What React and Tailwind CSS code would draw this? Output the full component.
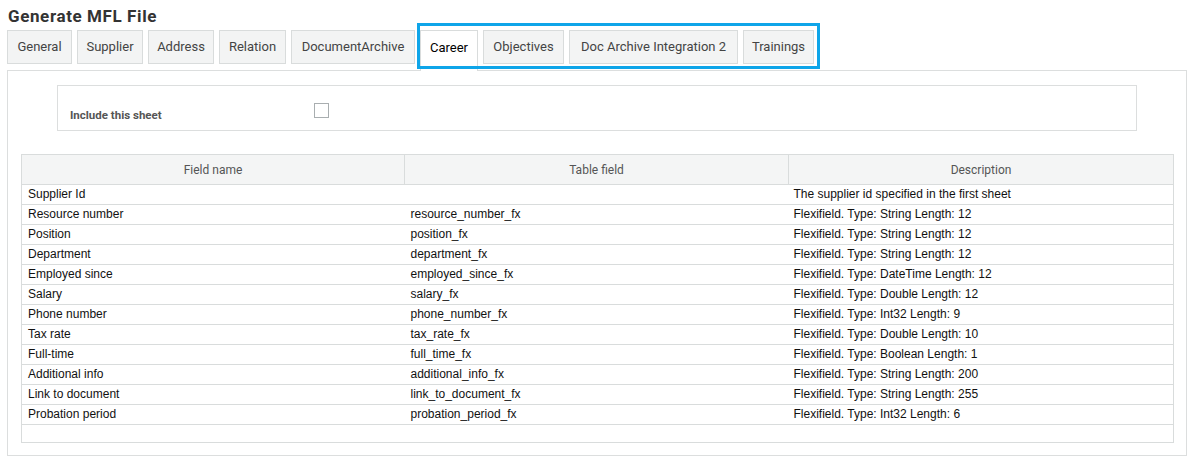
import React from "react";

const tabs = [
  ["General", "w-[65px]"],
  ["Supplier", "w-[66px]"],
  ["Address", "w-[66px]"],
  ["Relation", "w-[67px]"],
  ["DocumentArchive", "w-[124px]"],
];
const tabs2 = [
  ["Objectives", "w-[81px]"],
  ["Doc Archive Integration 2", "w-[169px]"],
  ["Trainings", "w-[71px]"],
];

const rows = [
  ["Supplier Id", "", "The supplier id specified in the first sheet"],
  ["Resource number", "resource_number_fx", "Flexifield. Type: String Length: 12"],
  ["Position", "position_fx", "Flexifield. Type: String Length: 12"],
  ["Department", "department_fx", "Flexifield. Type: String Length: 12"],
  ["Employed since", "employed_since_fx", "Flexifield. Type: DateTime Length: 12"],
  ["Salary", "salary_fx", "Flexifield. Type: Double Length: 12"],
  ["Phone number", "phone_number_fx", "Flexifield. Type: Int32 Length: 9"],
  ["Tax rate", "tax_rate_fx", "Flexifield. Type: Double Length: 10"],
  ["Full-time", "full_time_fx", "Flexifield. Type: Boolean Length: 1"],
  ["Additional info", "additional_info_fx", "Flexifield. Type: String Length: 200"],
  ["Link to document", "link_to_document_fx", "Flexifield. Type: String Length: 255"],
  ["Probation period", "probation_period_fx", "Flexifield. Type: Int32 Length: 6"],
];

function Tab({ label, w }) {
  return (
    <div className={`${w} h-[34px] flex items-center justify-center border border-[#d9dcdc] bg-[#f3f4f4] text-[13px] text-[#444] whitespace-nowrap`}>
      {label}
    </div>
  );
}

export default function App() {
  return (
    <div className="w-[1196px] h-[462px] bg-white pt-[6px] pl-[7px] pr-[9px]" style={{ fontFamily: "Roboto, 'Liberation Sans', sans-serif" }}>
      <div className="pl-[1px] text-[17px] font-bold text-[#333] leading-[20px] h-[24px] tracking-[0.6px]">Generate MFL File</div>
      <div className="relative flex items-start gap-[5px] h-[40px]">
        {tabs.map(([t, w]) => (
          <Tab key={t} label={t} w={w} />
        ))}
        <div className="w-[58px] h-[41px] pb-[6px] flex items-center justify-center border border-b-0 border-[#d9dcdc] bg-white text-[13px] text-black relative z-10">
          Career
        </div>
        {tabs2.map(([t, w]) => (
          <Tab key={t} label={t} w={w} />
        ))}
        <div className="absolute left-[410px] top-[-7px] w-[403px] h-[46px] border-[3px] border-[#0ea5e9] z-20 pointer-events-none" />
      </div>
      <div className="border border-[#dcdede] h-[386px] pt-[14px] px-[13px]">
        <div className="mx-[36px] h-[46px] border border-[#dcdede] flex items-start pt-[17px] pl-[12px]">
          <span className="w-[244px] mt-[5px] text-[11.5px] leading-[14px] font-bold text-[#555]">
            Include this sheet
          </span>
          <span className="w-[15px] h-[15px] border border-[#a9aeb0]" />
        </div>
        <table className="mt-[23px] w-[1153px] border-collapse text-[12px]" style={{ fontFamily: "'Liberation Sans', Arial, sans-serif" }}>
          <thead>
            <tr className="h-[30px] bg-[#f4f5f5] text-[#555]">
              <th className="w-[383px] border border-[#d9dcdc] font-normal text-center" style={{ fontFamily: "Roboto, sans-serif" }}>Field name</th>
              <th className="w-[384px] border border-[#d9dcdc] font-normal text-center" style={{ fontFamily: "Roboto, sans-serif" }}>Table field</th>
              <th className="border border-[#d9dcdc] font-normal text-center" style={{ fontFamily: "Roboto, sans-serif" }}>Description</th>
            </tr>
          </thead>
          <tbody>
            {rows.map((r) => (
              <tr key={r[0]} className="h-[20px] text-[#111]">
                <td className="border-y border-l border-[#d9dcdc] pl-[6px] py-0 leading-[19px]">{r[0]}</td>
                <td className="border-y border-[#d9dcdc] pl-[6px] py-0 leading-[19px]">{r[1]}</td>
                <td className="border-y border-r border-[#d9dcdc] pl-[5px] py-0 leading-[19px]">{r[2]}</td>
              </tr>
            ))}
            <tr className="h-[18px]">
              <td colSpan={3} className="border border-[#d9dcdc]"></td>
            </tr>
          </tbody>
        </table>
      </div>
    </div>
  );
}
